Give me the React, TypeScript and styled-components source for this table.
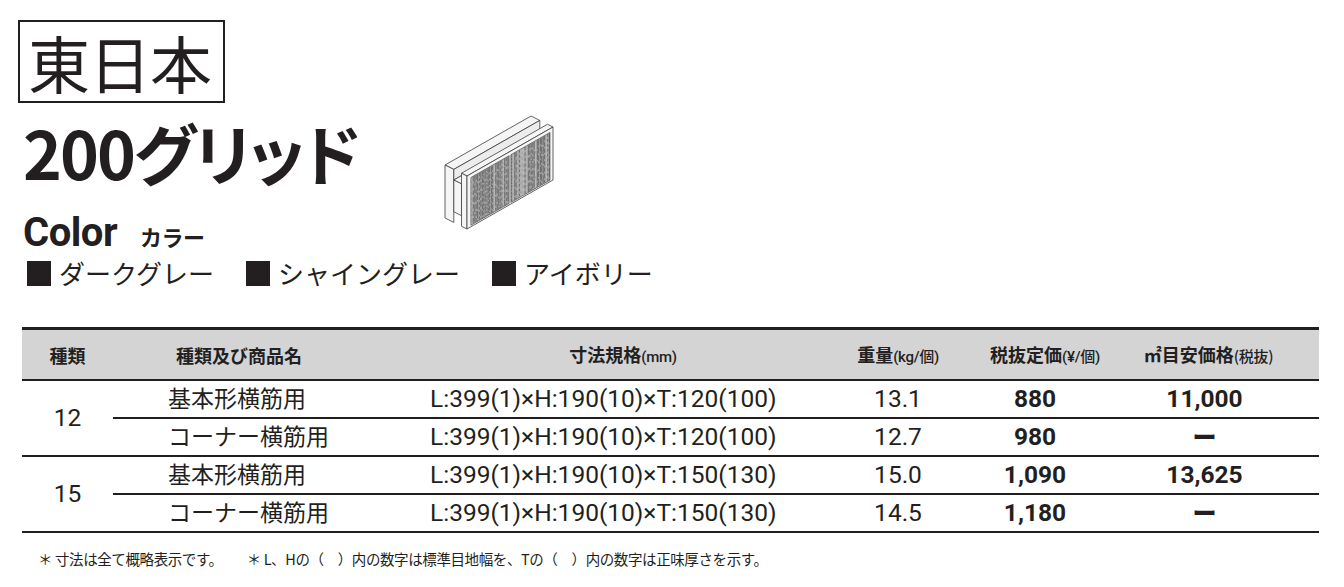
import React from 'react';
import styled, { createGlobalStyle } from 'styled-components';

const ink = '#231f20';
const jp = `"Noto Sans CJK JP", "Noto Sans", sans-serif`;
const latin = `Roboto, "Noto Sans CJK JP", sans-serif`;

const GlobalStyle = createGlobalStyle`
  html, body {
    margin: 0;
    padding: 0;
    background: #fff;
  }
  body {
    font-family: ${jp};
    color: ${ink};
  }
`;

const Page = styled.div`
  width: 1344px;
  height: 587px;
  padding: 20px 0 0 18px;
  box-sizing: border-box;
  overflow: hidden;
`;

const RegionBadge = styled.div`
  display: inline-flex;
  align-items: center;
  height: 79px;
  padding: 0 12px 0 8px;
  border: 2px solid ${ink};
  font-family: ${jp};
  font-size: 62px;
  font-weight: 400;
  line-height: 1;
  letter-spacing: -1px;
`;

const HeadRow = styled.div`
  display: flex;
  align-items: flex-start;
  margin-top: 15px;
`;

const TitleColumn = styled.div`
  width: 417px;
  display: flex;
  flex-direction: column;
`;

const ProductTitle = styled.h1`
  margin: 0 0 0 5px;
  font-family: ${jp};
  font-size: 66px;
  font-weight: 700;
  line-height: 1;
  letter-spacing: -2px;
  font-feature-settings: "palt";
  white-space: nowrap;
`;

const ColorHeading = styled.h2`
  margin: 29px 0 0 5px;
  display: flex;
  align-items: baseline;
  font-family: ${latin};
  font-size: 40px;
  font-weight: 700;
  line-height: 1;
  letter-spacing: -0.5px;
`;

const ColorKana = styled.span`
  margin-left: 23px;
  font-family: ${jp};
  font-size: 22px;
  font-weight: 700;
  letter-spacing: -0.5px;
`;

const Figure = styled.svg`
  display: block;
  margin-top: -6px;
`;

const SwatchList = styled.ul`
  display: flex;
  gap: 32px;
  margin: 5px 0 0 9px;
  padding: 0;
  list-style: none;
`;

const SwatchItem = styled.li`
  display: flex;
  align-items: center;
  gap: 8px;
  height: 30px;
  font-family: ${jp};
  font-size: 26px;
  font-weight: 400;
  line-height: 1;
`;

const SwatchChip = styled.span`
  display: block;
  width: 24px;
  height: 25px;
  background: ${ink};
`;

const SpecTable = styled.table`
  margin: 39px 0 0 4px;
  width: 1297px;
  border-collapse: collapse;
  table-layout: fixed;
`;

const HeadCell = styled.th<{ $align?: string; $pl?: number; $pr?: number }>`
  height: 49px;
  padding: 0 ${p => p.$pr ?? 0}px 0 ${p => p.$pl ?? 0}px;
  background: #d4d4d5;
  border-top: 3px solid ${ink};
  border-bottom: 2px solid ${ink};
  text-align: ${p => p.$align ?? 'center'};
  font-family: ${jp};
  font-size: 18px;
  font-weight: 700;
  line-height: 1;
  white-space: nowrap;
`;

const Paren = styled.span`
  font-family: ${latin};
  font-size: 15px;
  font-weight: 500;
  letter-spacing: -0.3px;

  & b {
    font-family: ${jp};
    font-weight: 500;
  }
`;

const BodyCell = styled.td<{ $align?: string; $pl?: number; $pr?: number; $bold?: boolean }>`
  height: 36px;
  padding: 0 ${p => p.$pr ?? 0}px 0 ${p => p.$pl ?? 0}px;
  border-bottom: 2px solid ${ink};
  text-align: ${p => p.$align ?? 'center'};
  font-family: ${latin};
  font-size: 24.5px;
  font-weight: ${p => (p.$bold ? 700 : 400)};
  line-height: 1;
  white-space: nowrap;
`;

const NameText = styled.span`
  font-family: ${jp};
  font-size: 23px;
  font-weight: 400;
`;

const Dash = styled.span`
  font-family: ${jp};
  font-size: 24px;
  font-weight: 900;
`;

const Note = styled.p`
  margin: 16px 0 0 20px;
  font-family: ${jp};
  font-size: 14.5px;
  line-height: 1.4;
  letter-spacing: -0.4px;
  white-space: nowrap;

  & span + span {
    margin-left: 24px;
  }
`;

// --- block illustration --------------------------------------------------

const O = [32, 64];
const L = [86, -49];
const H = [0, 53];
const D = [-22, -11];

const pt = (s: number, h: number, d: number) => [
  O[0] + s * L[0] + h * H[0] + d * D[0],
  O[1] + s * L[1] + h * H[1] + d * D[1],
];

const poly = (...pts: number[][]) => pts.map(p => p.map(n => n.toFixed(2)).join(',')).join(' ');

let seed = 7;
const rnd = () => {
  seed = (seed * 16807) % 2147483647;
  return seed / 2147483647;
};

const hatch = (s0: number, s1: number, h0: number, h1: number) => {
  const lines: { x: number; y1: number; y2: number; c: string; w: number; dash: string }[] = [];
  const x0 = O[0] + s0 * L[0];
  const x1 = O[0] + s1 * L[0];
  for (let x = x0 + 0.9; x < x1 - 0.3; x += 1.5) {
    const s = (x - O[0]) / L[0];
    const yt = O[1] + s * L[1] + h0 * H[1];
    const yb = O[1] + s * L[1] + h1 * H[1];
    const dark = rnd() > 0.4;
    lines.push({
      x: x + (rnd() - 0.5) * 0.4,
      y1: yt + 0.5,
      y2: yb - 0.5,
      c: dark ? '#4a4a4a' : '#d8d8d8',
      w: dark ? 0.6 : 0.5,
      dash: `${(2 + rnd() * 8).toFixed(1)} ${(0.8 + rnd() * 2).toFixed(1)}`,
    });
  }
  return lines;
};

const panels = [
  { s0: 0.045, s1: 0.49 },
  { s0: 0.51, s1: 0.965 },
];

const hatchLines = panels.map(p => hatch(p.s0, p.s1, 0.07, 0.97));

const BlockFigure = () => {
  const face = { fill: '#f5f5f5', stroke: '#3d3d3d', strokeWidth: 0.8, strokeLinejoin: 'round' as const };
  return (
    <Figure width="130" height="125" viewBox="0 0 130 125">
      <polygon {...face} points={poly(pt(0, 0, 0.6), pt(0, 0, 1), pt(1, 0, 1), pt(1, 0, 0.6))} />
      <polygon {...face} points={poly(pt(0, 0, 1), pt(0, 0, 0.6), pt(0, 1, 0.6), pt(0, 1, 1))} />
      <polygon {...face} fill="#ececec" points={poly(pt(0, 0, 0.6), pt(1, 0, 0.6), pt(1, 0.2, 0.6), pt(0, 0.2, 0.6))} />
      <polygon {...face} points={poly(pt(0, 0.2, 0.25), pt(0, 0.2, 0.6), pt(1, 0.2, 0.6), pt(1, 0.2, 0.25))} />
      <path
        d={`M${pt(0.42, 0.2, 0.25).join(',')} Q${pt(0.47, 0.05, 0.45).join(',')} ${pt(0.5, 0.2, 0.6).join(',')}`}
        fill="none"
        stroke="#3d3d3d"
        strokeWidth="0.7"
      />
      <path
        d={`M${pt(0.6, 0.2, 0.25).join(',')} Q${pt(0.63, 0.08, 0.45).join(',')} ${pt(0.66, 0.2, 0.6).join(',')}`}
        fill="none"
        stroke="#3d3d3d"
        strokeWidth="0.7"
      />
      <polygon {...face} points={poly(pt(0, 0.2, 0.6), pt(0, 0.2, 0.25), pt(0, 0.8, 0.25), pt(0, 0.8, 0.6))} />
      <polygon {...face} points={poly(pt(0, 0, 0), pt(0, 0, 0.25), pt(1, 0, 0.25), pt(1, 0, 0))} />
      <polygon {...face} points={poly(pt(0, 0, 0.25), pt(0, 0, 0), pt(0, 1, 0), pt(0, 1, 0.25))} />
      <polygon {...face} points={poly(pt(0, 0, 0), pt(1, 0, 0), pt(1, 1, 0), pt(0, 1, 0))} />
      {panels.map((p, i) => (
        <g key={i}>
          <polygon
            fill="#a3a3a3"
            stroke="#3d3d3d"
            strokeWidth="0.6"
            points={poly(pt(p.s0, 0.07, 0), pt(p.s1, 0.07, 0), pt(p.s1, 0.97, 0), pt(p.s0, 0.97, 0))}
          />
          {hatchLines[i].map((l, j) => (
            <line key={j} x1={l.x} y1={l.y1} x2={l.x} y2={l.y2} stroke={l.c} strokeWidth={l.w} strokeDasharray={l.dash} />
          ))}
        </g>
      ))}
    </Figure>
  );
};

// --- data ------------------------------------------------------------------

const groups = [
  {
    type: '12',
    items: [
      { name: '基本形横筋用', size: 'L:399(1)×H:190(10)×T:120(100)', weight: '13.1', price: '880', sqm: '11,000' },
      { name: 'コーナー横筋用', size: 'L:399(1)×H:190(10)×T:120(100)', weight: '12.7', price: '980', sqm: 'ー' },
    ],
  },
  {
    type: '15',
    items: [
      { name: '基本形横筋用', size: 'L:399(1)×H:190(10)×T:150(130)', weight: '15.0', price: '1,090', sqm: '13,625' },
      { name: 'コーナー横筋用', size: 'L:399(1)×H:190(10)×T:150(130)', weight: '14.5', price: '1,180', sqm: 'ー' },
    ],
  },
];

const colors = ['ダークグレー', 'シャイングレー', 'アイボリー'];

export default function App() {
  return (
    <>
      <GlobalStyle />
      <Page>
        <RegionBadge>東日本</RegionBadge>
        <HeadRow>
          <TitleColumn>
            <ProductTitle>200グリッド</ProductTitle>
            <ColorHeading>
              Color<ColorKana>カラー</ColorKana>
            </ColorHeading>
          </TitleColumn>
          <BlockFigure />
        </HeadRow>
        <SwatchList>
          {colors.map(c => (
            <SwatchItem key={c}>
              <SwatchChip />
              {c}
            </SwatchItem>
          ))}
        </SwatchList>
        <SpecTable>
          <colgroup>
            <col style={{ width: 91 }} />
            <col style={{ width: 287 }} />
            <col style={{ width: 446 }} />
            <col style={{ width: 104 }} />
            <col style={{ width: 170 }} />
            <col style={{ width: 199 }} />
          </colgroup>
          <thead>
            <tr>
              <HeadCell>種類</HeadCell>
              <HeadCell $align="left" $pl={63}>種類及び商品名</HeadCell>
              <HeadCell>
                寸法規格<Paren>(mm)</Paren>
              </HeadCell>
              <HeadCell>
                重量<Paren>(kg/<b>個</b>)</Paren>
              </HeadCell>
              <HeadCell $pl={20}>
                税抜定価<Paren>(¥/<b>個</b>)</Paren>
              </HeadCell>
              <HeadCell $pr={22}>
                ㎡目安価格<Paren><b>(税抜)</b></Paren>
              </HeadCell>
            </tr>
          </thead>
          <tbody>
            {groups.map(g =>
              g.items.map((r, i) => (
                <tr key={g.type + i}>
                  {i === 0 && <BodyCell rowSpan={g.items.length}>{g.type}</BodyCell>}
                  <BodyCell $align="left" $pl={55}>
                    <NameText>{r.name}</NameText>
                  </BodyCell>
                  <BodyCell $align="left" $pl={30}>{r.size}</BodyCell>
                  <BodyCell>{r.weight}</BodyCell>
                  <BodyCell $bold>{r.price}</BodyCell>
                  <BodyCell $bold $pr={30}>
                    {r.sqm === 'ー' ? <Dash>ー</Dash> : r.sqm}
                  </BodyCell>
                </tr>
              ))
            )}
          </tbody>
        </SpecTable>
        <Note>
          <span>＊ 寸法は全て概略表示です。</span>
          <span>＊ L、Hの（　）内の数字は標準目地幅を、Tの（　）内の数字は正味厚さを示す。</span>
        </Note>
      </Page>
    </>
  );
}
